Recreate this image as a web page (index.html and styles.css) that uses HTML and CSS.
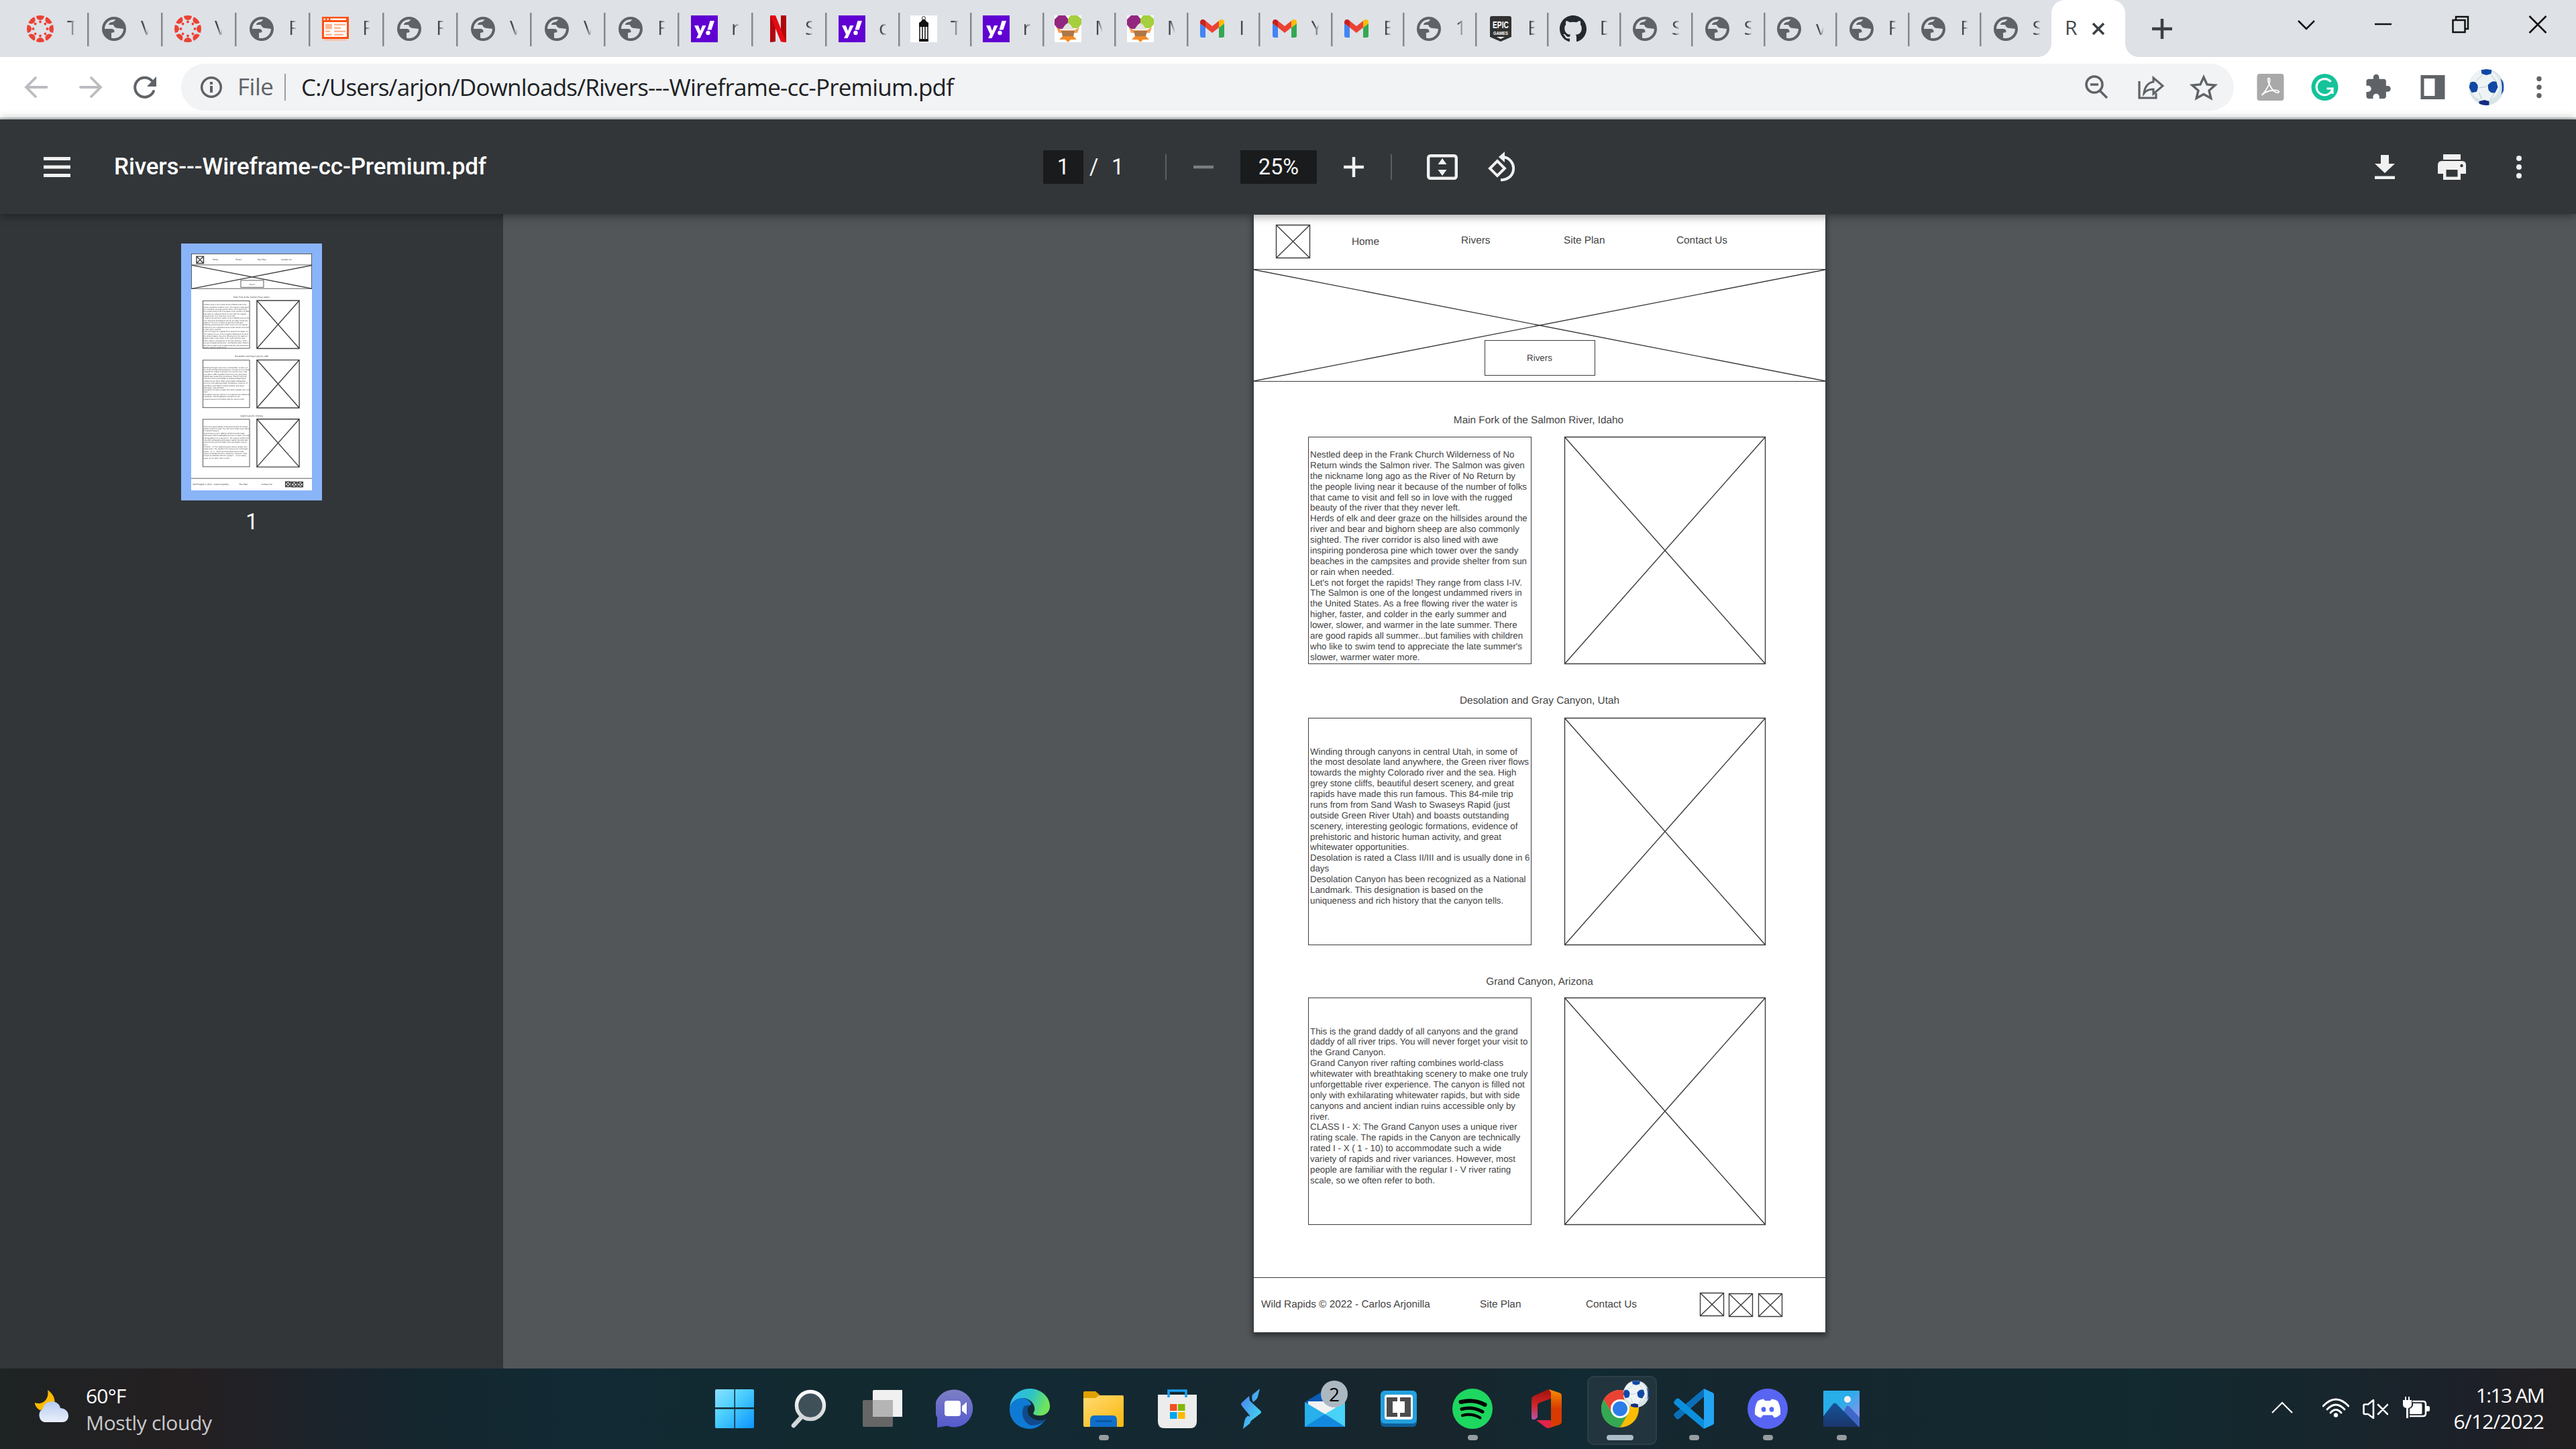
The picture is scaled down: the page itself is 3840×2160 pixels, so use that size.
FILE: index.html
```html
<!DOCTYPE html>
<html lang="en">
<head>
<meta charset="utf-8">
<title>Rivers---Wireframe-cc-Premium.pdf</title>
<link rel="stylesheet" href="styles.css">
</head>
<body>
<svg class="defs" width="0" height="0">
  <defs>
    <linearGradient id="gWin" x1="0" y1="0" x2="1" y2="1"><stop offset="0" stop-color="#8be0ff"/><stop offset=".4" stop-color="#4fd0ff"/><stop offset="1" stop-color="#0a95ff"/></linearGradient>
    <linearGradient id="gGlass" x1="0" y1="0" x2="0" y2="1"><stop offset="0" stop-color="#fff"/><stop offset="1" stop-color="#d0d4d6"/></linearGradient>
    <linearGradient id="gChat" x1="0" y1="0" x2="0" y2="1"><stop offset="0" stop-color="#7d7fc4"/><stop offset="1" stop-color="#5459cf"/></linearGradient>
    <linearGradient id="gEdge" x1="0" y1="0" x2="1" y2=".3"><stop offset="0" stop-color="#35b6f4"/><stop offset=".55" stop-color="#2cc3c8"/><stop offset="1" stop-color="#6fe45c"/></linearGradient>
    <linearGradient id="gFold" x1="0" y1="0" x2="1" y2="1"><stop offset="0" stop-color="#ffdb74"/><stop offset="1" stop-color="#fbb70c"/></linearGradient>
    <linearGradient id="gS" x1="0" y1="0" x2="1" y2="1"><stop offset="0" stop-color="#4a7bf0"/><stop offset="1" stop-color="#41e3ee"/></linearGradient>
    <linearGradient id="gOff" x1="0" y1="0" x2="0" y2="1"><stop offset="0" stop-color="#a01010"/><stop offset=".5" stop-color="#d02424"/><stop offset="1" stop-color="#b754a8"/></linearGradient>
    <linearGradient id="gOff2" x1="0" y1="0" x2="0" y2="1"><stop offset="0" stop-color="#f58f00"/><stop offset=".5" stop-color="#d83b01"/></linearGradient>
    <linearGradient id="gPh" x1="0" y1="0" x2="1" y2="1"><stop offset=".4" stop-color="#28aee9"/><stop offset="1" stop-color="#a98bf0"/></linearGradient>
    <linearGradient id="gMt" x1="0" y1="0" x2="0" y2="1"><stop offset="0" stop-color="#15559a"/><stop offset="1" stop-color="#1a356c"/></linearGradient>
    <linearGradient id="gCl" x1="0" y1="0" x2="0" y2="1"><stop offset="0" stop-color="#b6cbf2"/><stop offset="1" stop-color="#eaf0fa"/></linearGradient>
  </defs>
  <symbol id="canvas" viewBox="0 0 40 40">
    <g fill="#ec4133">
      <g id="lobes"><path d="M14 1a20 20 0 0 1 12 0a6 6 0 0 1-12 0z"/><circle cx="20" cy="9.5" r="1.9"/></g>
      <use href="#lobes" transform="rotate(45 20 20)"/><use href="#lobes" transform="rotate(90 20 20)"/><use href="#lobes" transform="rotate(135 20 20)"/><use href="#lobes" transform="rotate(180 20 20)"/><use href="#lobes" transform="rotate(225 20 20)"/><use href="#lobes" transform="rotate(270 20 20)"/><use href="#lobes" transform="rotate(315 20 20)"/>
    </g>
  </symbol>
  <symbol id="globe" viewBox="0 0 40 40"><circle cx="20" cy="20" r="18" fill="#5f6368"/><path fill="#dee1e6" d="M6 20A14 14 0 0 1 22.500 6.200L19 9.500Q12 10 12 14L19 14Q20.500 19 26 19L34 20A14 14 0 0 1 16 33.400L16 26L20.500 25Q21 20 16 20Z"/></symbol>
  <symbol id="doc" viewBox="0 0 40 40"><path fill="#f4c7b6" d="M3 34h34v4H3z"/><path fill="#ff4f12" d="M0 2h40v33H0z"/><path fill="#fff" d="M3 10h34v22H3zM2.500 4.500h2.500v2.500H2.500zM7.500 4.500h2.500v2.500H7.500zM12.500 4.500H36v2.500H12.500z"/><path fill="#ffb592" d="M5 12.500h10v8H5zM18 12.500h17v2.500H18zM18 17.500h10v2.500H18zM5 22.500h7v2.500H5zM18 22.500h17v2.500H18zM5 27.500h10v2.500H5zM18 27.500h14v2.500H18z"/></symbol>
  <symbol id="yahoo" viewBox="0 0 40 40"><path fill="#6001d2" d="M0 0h40v40H0z"/><path fill="#fff" d="M5 15h6l3 8 3-8h5.500L13.500 34H8l3-6zM28.500 8H35l-4.500 13.500H24.500z"/><circle cx="25.500" cy="26" r="3.200" fill="#fff"/></symbol>
  <symbol id="netflix" viewBox="0 0 40 40"><path fill="#b1060f" d="M8 0h8v39l-8 1zM24 0h8v40l-8-1z"/><path fill="#e50914" d="M8 0h8l16 40-8-1z"/></symbol>
  <symbol id="lantern" viewBox="0 0 40 40"><path fill="#fff" d="M0 0h40v40H0z"/><circle cx="20" cy="4" r="2.500" fill="none" stroke="#333"/><path fill="#111" d="M18 6h4l2 3 3 2v2H13v-2l3-2zM13 13h14v4H13zM13 35h14v4H13z"/><path stroke="#222" stroke-width="1.600" d="M14 17v19M18 17v19M22 17v19M26 17v19" fill="none"/></symbol>
  <symbol id="plants" viewBox="0 0 40 40"><path fill="#fff" d="M0 0h40v40H0z"/><path fill="#92267f" d="M6 0h10l4 5v10l-6 5H5l-5-6V6z"/><path fill="#a5cf3d" d="M24 0h10l6 5v8l-5 6h-9l-6-5V5z"/><path fill="#e3e3df" d="M16 14l4-3 4 3 5 7H11z"/><path fill="#f3a05d" d="M3 18l8 4h18l8-4-3 8H6z"/><path fill="#ad7747" d="M10 23h20l-2 8H12z"/><path fill="#f58a25" d="M12 31h16l5 5H24l-4 4-4-4H7z"/></symbol>
  <symbol id="gmail" viewBox="0 0 40 40"><path fill="#4285f4" d="M2 12l8 6v15H4.500Q2 33 2 30z"/><path fill="#34a853" d="M38 12l-8 6v15h5.500Q38 33 38 30z"/><path fill="#c5221f" d="M2 12V10c0-4 4-5 7-3l1 1v10z"/><path fill="#fbbc04" d="M38 12V10c0-4-4-5-7-3l-1 1v10z"/><path fill="#ea4335" d="M10 8l10 8 10-8v10l-10 8-10-8z"/></symbol>
  <symbol id="epic" viewBox="0 0 40 40"><path fill="#313131" d="M7 1h26q3 0 3 3v28L20 39 4 32V4q0-3 3-3z"/><text x="20" y="19" text-anchor="middle" class="epic-lg" textLength="24" lengthAdjust="spacingAndGlyphs">EPIC</text><text x="20" y="28.500" text-anchor="middle" class="epic-sm" textLength="22" lengthAdjust="spacingAndGlyphs">GAMES</text><path fill="#fff" d="M14 32h12l-6 3z"/></symbol>
  <symbol id="github" viewBox="0 0 16 16"><path fill="#24292f" d="M8 0C3.580 0 0 3.580 0 8c0 3.540 2.290 6.530 5.470 7.590.4.070.55-.17.55-.38 0-.19-.01-.82-.01-1.490-2.010.37-2.530-.49-2.690-.94-.09-.23-.48-.94-.82-1.130-.28-.15-.68-.52-.01-.53.63-.01 1.080.58 1.230.82.72 1.210 1.870.87 2.330.66.070-.52.28-.87.51-1.070-1.780-.2-3.640-.89-3.640-3.950 0-.87.31-1.590.82-2.150-.08-.2-.36-1.020.08-2.120 0 0 .67-.21 2.200.82.64-.18 1.320-.27 2-.27s1.360.09 2 .27c1.530-1.040 2.200-.82 2.200-.82.44 1.100.16 1.920.08 2.120.51.56.82 1.270.82 2.150 0 3.070-1.870 3.750-3.650 3.950.29.25.54.73.54 1.480 0 1.070-.01 1.930-.01 2.200 0 .21.15.46.55.38A8.010 8.010 0 0 0 16 8c0-4.420-3.580-8-8-8z"/></symbol>
  <symbol id="ball" viewBox="0 0 52 54"><clipPath id="ballClip"><ellipse cx="26" cy="27" rx="26" ry="27"/></clipPath><g clip-path="url(#ballClip)"><path fill="#d9e4e8" d="M0 0h52v54H0z"/><ellipse cx="24" cy="24" rx="22" ry="23" fill="#eef4f5"/><path fill="none" stroke="#b8c4cc" stroke-width="1" d="M20 9l-10 9M33 9l8 10M15 28l11-2M15 35l4 10M38 36l-6 9"/><path fill="#1148a5" d="M18 1l8-1 8 1-1 6-7 2-7-2zM2 20q7-4 11 4 1 5-2 10l-7 1-4-8zM28 24q6-8 13-5l2 8-4 8q-6 2-10-4zM47 14l5 6v12l-4 6q3-12-1-24z"/><path fill="#152c80" d="M15 48l8-2 7 2v6H15z"/></g></symbol>
</svg>

<div class="screen">
  <header class="tabstrip">
    <div class="tab wide"><svg class="fav"><use href="#canvas"/></svg><span>T</span></div>
    <div class="tab wide"><svg class="fav"><use href="#globe"/></svg><span>V</span></div>
    <div class="tab wide"><svg class="fav"><use href="#canvas"/></svg><span>V</span></div>
    <div class="tab wide"><svg class="fav"><use href="#globe"/></svg><span>R</span></div>
    <div class="tab wide"><svg class="fav"><use href="#doc"/></svg><span>R</span></div>
    <div class="tab wide"><svg class="fav"><use href="#globe"/></svg><span>R</span></div>
    <div class="tab wide"><svg class="fav"><use href="#globe"/></svg><span>V</span></div>
    <div class="tab wide"><svg class="fav"><use href="#globe"/></svg><span>V</span></div>
    <div class="tab wide"><svg class="fav"><use href="#globe"/></svg><span>F</span></div>
    <div class="tab wide"><svg class="fav"><use href="#yahoo"/></svg><span>r</span></div>
    <div class="tab wide"><svg class="fav"><use href="#netflix"/></svg><span>S</span></div>
    <div class="tab wide last"><svg class="fav"><use href="#yahoo"/></svg><span>c</span></div>
    <div class="tab"><svg class="fav"><use href="#lantern"/></svg><span>T</span></div>
    <div class="tab"><svg class="fav"><use href="#yahoo"/></svg><span>r</span></div>
    <div class="tab"><svg class="fav"><use href="#plants"/></svg><span>M</span></div>
    <div class="tab"><svg class="fav"><use href="#plants"/></svg><span>M</span></div>
    <div class="tab"><svg class="fav"><use href="#gmail"/></svg><span>I</span></div>
    <div class="tab"><svg class="fav"><use href="#gmail"/></svg><span>Y</span></div>
    <div class="tab"><svg class="fav"><use href="#gmail"/></svg><span>E</span></div>
    <div class="tab"><svg class="fav"><use href="#globe"/></svg><span>1</span></div>
    <div class="tab"><svg class="fav"><use href="#epic"/></svg><span>E</span></div>
    <div class="tab"><svg class="fav"><use href="#github"/></svg><span>D</span></div>
    <div class="tab"><svg class="fav"><use href="#globe"/></svg><span>S</span></div>
    <div class="tab"><svg class="fav"><use href="#globe"/></svg><span>S</span></div>
    <div class="tab"><svg class="fav"><use href="#globe"/></svg><span>v</span></div>
    <div class="tab"><svg class="fav"><use href="#globe"/></svg><span>F</span></div>
    <div class="tab"><svg class="fav"><use href="#globe"/></svg><span>F</span></div>
    <div class="tab"><svg class="fav"><use href="#globe"/></svg><span>S</span></div>
    <div class="tab active"><span>R</span><svg class="close" viewBox="0 0 20 20"><path d="M2 2l16 16M18 2L2 18" stroke="#3c4043" stroke-width="3.600"/></svg></div>
    <svg class="plus" viewBox="0 0 30 30"><path d="M15 0v30M0 15h30" stroke="#3c4043" stroke-width="4.500"/></svg>
    <div class="winctl">
      <svg viewBox="0 0 115 72"><path d="M46 31l12 12 12-12" fill="none" stroke="#111" stroke-width="2.500"/></svg>
      <svg viewBox="0 0 115 72"><path d="M45 36h25" stroke="#111" stroke-width="2.500"/></svg>
      <svg viewBox="0 0 115 72"><path d="M46.500 30h18v18h-18zM51 29v-4h18v18h-4" fill="none" stroke="#111" stroke-width="2.500"/></svg>
      <svg viewBox="0 0 115 72"><path d="M45.500 24l25 25M70.500 24l-25 25" stroke="#111" stroke-width="2.500"/></svg>
    </div>
  </header>

  <nav class="toolbar">
    <svg class="navbtn" viewBox="0 0 80 90"><path d="M50.500 45H21M34 31L20 45l14 14" fill="none" stroke="#babcc0" stroke-width="3.800" stroke-linecap="round"/></svg>
    <svg class="navbtn" viewBox="0 0 80 90"><path d="M21 45h30M37 31l14 14-14 14" fill="none" stroke="#babcc0" stroke-width="3.800" stroke-linecap="round"/></svg>
    <svg class="navbtn" viewBox="0 0 80 90"><path d="M51 51A14.500 14.500 0 1 1 48 35" transform="translate(-1 0)" fill="none" stroke="#5f6368" stroke-width="4" stroke-linecap="round"/><path d="M54 29v15H40z" fill="#5f6368"/></svg>
    <div class="omnibox">
      <svg class="info" viewBox="0 0 34 34"><circle cx="17" cy="17" r="14.300" fill="none" stroke="#5f6368" stroke-width="3.500"/><path d="M15 9h4v4h-4zM15 15h4v10h-4z" fill="#5f6368"/></svg>
      <span class="scheme">File</span>
      <span class="url">C:/Users/arjon/Downloads/Rivers---Wireframe-cc-Premium.pdf</span>
      <svg class="obtn" viewBox="0 0 80 70"><circle cx="37" cy="31" r="12" fill="none" stroke="#5f6368" stroke-width="3.500"/><path d="M31 31h12M45 40l11 11" stroke="#5f6368" stroke-width="3.500"/></svg>
      <svg class="obtn" viewBox="0 0 80 70"><path d="M24 26v25h25v-7" fill="none" stroke="#5f6368" stroke-width="3.200"/><path d="M45 21l14 12-14 12v-7c-7 0-11 2-14 6 1-9 6-16 14-17z" fill="none" stroke="#5f6368" stroke-width="3"/></svg>
      <svg class="obtn" viewBox="0 0 80 70"><path d="M40 20l5 11 12 1-9 8 2.800 11.500L40 45.500l-10.800 6L32 40l-9-8 12-1z" fill="none" stroke="#5f6368" stroke-width="3.400"/></svg>
    </div>
    <svg class="ext" viewBox="0 0 80 90"><rect x="20" y="25" width="40" height="40" rx="4" fill="#a9a9a9"/><path d="M27 57c9-9 13-20 12-24-2-4-5 0 0 9 4 8 9 12 13 11 3-2-3-5-11-3-6 1-11 4-14 7z" fill="none" stroke="#fff" stroke-width="1.800"/></svg>
    <svg class="ext" viewBox="0 0 80 90"><circle cx="40" cy="45" r="20" fill="#15c39a"/><path d="M49 37a12 12 0 1 0 2.500 10H43M51.500 47v8" fill="none" stroke="#fff" stroke-width="3.200"/></svg>
    <svg class="ext" viewBox="0 0 80 90"><path transform="translate(17.500 24) scale(1.730)" fill="#5f6368" d="M20.500 11H19V7c0-1.100-.9-2-2-2h-4V3.500a2.500 2.500 0 0 0-5 0V5H4c-1.100 0-1.990.9-1.990 2v3.800H3.500c1.490 0 2.700 1.210 2.700 2.700s-1.210 2.700-2.700 2.700H2V20c0 1.100.9 2 2 2h3.800v-1.500c0-1.490 1.210-2.700 2.700-2.700s2.700 1.210 2.700 2.700V22H17c1.100 0 2-.9 2-2v-4h1.500a2.500 2.500 0 0 0 0-5z"/></svg>
    <svg class="ext" viewBox="0 0 80 90"><path fill-rule="evenodd" fill="#5f6368" d="M21 27h36v36H21zM26 32v26h16V32z"/></svg>
    <svg class="avatar"><use href="#ball"/></svg>
    <svg class="kebab" viewBox="0 0 80 90"><g fill="#5f6368"><circle cx="40" cy="32.500" r="3.700"/><circle cx="40" cy="45" r="3.700"/><circle cx="40" cy="57.500" r="3.700"/></g></svg>
  </nav>

  <section class="pdfbar">
    <div class="left">
      <svg class="burger" viewBox="0 0 40 30"><path fill="#f1f1f1" d="M0 0h40v5H0zM0 12.500h40v5H0zM0 25h40v5H0z"/></svg>
      <span class="doctitle">Rivers---Wireframe-cc-Premium.pdf</span>
    </div>
    <div class="center">
      <span class="pagebox">1</span><span class="slash">/</span><span class="total">1</span>
      <i class="vr"></i>
      <svg class="minus" viewBox="0 0 30 30"><path d="M0 15h30" stroke="#7b7d80" stroke-width="4.500"/></svg>
      <span class="zoombox">25%</span>
      <svg class="pplus" viewBox="0 0 30 30"><path d="M15 0v30M0 15h30" stroke="#f1f1f1" stroke-width="4.500"/></svg>
      <i class="vr"></i>
      <svg class="fit" viewBox="0 0 46 38"><rect x="2.200" y="2.200" width="41.600" height="33.600" rx="3" fill="none" stroke="#f1f1f1" stroke-width="4.400"/><path fill="#f1f1f1" d="M23 6l6.500 9h-13zM23 32l6.500-9h-13z"/></svg>
      <svg class="rot" viewBox="0 0 46 46"><path fill="none" stroke="#f1f1f1" stroke-width="4" d="M14 14L25 25 14 36 3 25zM23 8a17 17 0 1 1-4 34" transform="translate(1 0)"/><path fill="#f1f1f1" d="M26 0v16l-9-8z"/></svg>
    </div>
    <div class="right">
      <svg class="dl" viewBox="0 0 30 36"><path fill="#f1f1f1" d="M9 0h12v13h9L15 27 0 13h9zM0 31.500h30V36H0z"/></svg>
      <svg class="pr" viewBox="0 0 42 38"><path fill="#f1f1f1" d="M8 0h26v8H8zM6 10h30q6 0 6 6v13h-8v9H8v-9H0V16q0-6 6-6z"/><path fill="#323639" d="M12.500 23h17v10.500h-17z"/><circle cx="35.500" cy="17" r="2.200" fill="#323639"/></svg>
      <svg class="pk" viewBox="0 0 10 36"><g fill="#f1f1f1"><circle cx="5" cy="5" r="4"/><circle cx="5" cy="18" r="4"/><circle cx="5" cy="31" r="4"/></g></svg>
    </div>
  </section>

  <main class="viewer">
    <aside class="side">
      <div class="thumb"><div class="mini"></div></div>
      <span class="thumbno">1</span>
    </aside>
    <div class="stage">
      <article class="sheet">
        <div class="w-head">
          <svg class="ph logo" viewBox="0 0 51 50" preserveAspectRatio="none"><path d="M.5.5h50v49H.5zM.5.500l50 49M50.500.500l-50 49"/></svg>
          <div class="w-nav"><span class="home">Home</span><span>Rivers</span><span>Site Plan</span><span>Contact Us</span></div>
        </div>
        <div class="w-hero">
          <svg class="ph cross" viewBox="0 0 852 166"><path d="M0 0l852 166M852 0L0 166"/></svg>
          <span class="w-btn">Rivers</span>
        </div>
        <div class="w-sec one">
          <h2>Main Fork of the Salmon River, Idaho</h2>
          <div class="w-row">
            <p>Nestled deep in the Frank Church Wilderness of No<br>Return winds the Salmon river. The Salmon was given<br>the nickname long ago as the River of No Return by<br>the people living near it because of the number of folks<br>that came to visit and fell so in love with the rugged<br>beauty of the river that they never left.<br>Herds of elk and deer graze on the hillsides around the<br>river and bear and bighorn sheep are also commonly<br>sighted. The river corridor is also lined with awe<br>inspiring ponderosa pine which tower over the sandy<br>beaches in the campsites and provide shelter from sun<br>or rain when needed.<br>Let's not forget the rapids! They range from class I-IV.<br>The Salmon is one of the longest undammed rivers in<br>the United States. As a free flowing river the water is<br>higher, faster, and colder in the early summer and<br>lower, slower, and warmer in the late summer. There<br>are good rapids all summer...but families with children<br>who like to swim tend to appreciate the late summer's<br>slower, warmer water more.</p>
            <svg class="ph pic" viewBox="0 0 300 339"><path d="M.5.500h299v338H.5zM.5.500l299 338M299.500.500L.5 338.500"/></svg>
          </div>
        </div>
        <div class="w-sec two">
          <h2>Desolation and Gray Canyon, Utah</h2>
          <div class="w-row">
            <p>Winding through canyons in central Utah, in some of<br>the most desolate land anywhere, the Green river flows<br>towards the mighty Colorado river and the sea. High<br>grey stone cliffs, beautiful desert scenery, and great<br>rapids have made this run famous. This 84-mile trip<br>runs from from Sand Wash to Swaseys Rapid (just<br>outside Green River Utah) and boasts outstanding<br>scenery, interesting geologic formations, evidence of<br>prehistoric and historic human activity, and great<br>whitewater opportunities.<br>Desolation is rated a Class II/III and is usually done in 6<br>days<br>Desolation Canyon has been recognized as a National<br>Landmark. This designation is based on the<br>uniqueness and rich history that the canyon tells.</p>
            <svg class="ph pic" viewBox="0 0 300 339"><path d="M.5.500h299v338H.5zM.5.500l299 338M299.500.500L.5 338.500"/></svg>
          </div>
        </div>
        <div class="w-sec three">
          <h2>Grand Canyon, Arizona</h2>
          <div class="w-row">
            <p>This is the grand daddy of all canyons and the grand<br>daddy of all river trips. You will never forget your visit to<br>the Grand Canyon.<br>Grand Canyon river rafting combines world-class<br>whitewater with breathtaking scenery to make one truly<br>unforgettable river experience. The canyon is filled not<br>only with exhilarating whitewater rapids, but with side<br>canyons and ancient indian ruins accessible only by<br>river.<br>CLASS I - X: The Grand Canyon uses a unique river<br>rating scale. The rapids in the Canyon are technically<br>rated I - X ( 1 - 10) to accommodate such a wide<br>variety of rapids and river variances. However, most<br>people are familiar with the regular I - V river rating<br>scale, so we often refer to both.</p>
            <svg class="ph pic" viewBox="0 0 300 339"><path d="M.5.500h299v338H.5zM.5.500l299 338M299.500.500L.5 338.500"/></svg>
          </div>
        </div>
        <div class="w-foot">
          <span class="copy">Wild Rapids © 2022 - Carlos Arjonilla</span><span class="plan">Site Plan</span><span class="contact">Contact Us</span>
          <svg class="ph soc up" viewBox="0 0 36 35"><path d="M.5.500h35v34H.5zM.5.500l35 34M35.500.500l-35 34"/></svg>
          <svg class="ph soc" viewBox="0 0 36 35"><path d="M.5.500h35v34H.5zM.5.500l35 34M35.500.500l-35 34"/></svg>
          <svg class="ph soc" viewBox="0 0 36 35"><path d="M.5.500h35v34H.5zM.5.500l35 34M35.500.500l-35 34"/></svg>
        </div>
      </article>
    </div>
  </main>

  <footer class="taskbar">
    <div class="weather">
      <svg class="wicon" viewBox="0 0 54 50"><path fill="#fdb900" d="M20 1c10 7 14 17 7 28L8 31C3 27 1 24 1 20c10 4 22-4 19-19z"/><path fill="url(#gCl)" d="M15 49A11 11 0 0 1 13 29c1-14 24-14 26-1 16 1 15 21 3 21z"/></svg>
      <div class="wtext"><span>60°F</span><span class="dim">Mostly cloudy</span></div>
    </div>
    <div class="apps">
      <div class="app"><svg viewBox="0 0 60 60"><path fill="url(#gWin)" d="M3 1h26.500v27H1V3q0-2 2-2zM31 1h26q2 0 2 2v25H31zM1 30.500h28.500V59H3q-2 0-2-2zM31 30.500h28V57q0 2-2 2H31z"/></svg></div>
      <div class="app"><svg viewBox="0 0 60 60"><path d="M20 42L8 55" stroke="#d3d7d9" stroke-width="6.500" stroke-linecap="round"/><circle cx="33" cy="25" r="20.500" fill="#3f5058" stroke="url(#gGlass)" stroke-width="5.500"/></svg></div>
      <div class="app"><svg viewBox="0 0 60 60"><rect x="16" y="2" width="45" height="40" rx="2" fill="#f0f0f0"/><rect x="1" y="17" width="45" height="40" rx="2" fill="#666"/><path fill="#b5b5b5" d="M16 17h30v25H16z"/></svg></div>
      <div class="app"><svg viewBox="0 0 60 60"><path fill="url(#gChat)" d="M29 1.500a28 28 0 1 1-12 54L2 58V43A28 28 0 0 1 29 1.500z"/><rect x="13" y="18" width="24" height="23" rx="4" fill="#fff"/><path fill="#fff" d="M39 26l7-6v19l-7-6z"/></svg></div>
      <div class="app"><svg viewBox="0 0 60 60"><path fill="#0f7ad4" d="M0 29C2 17 12 12 20 14c8 2 12 6 12 10-9 3-8 19 5 23 8 3 14 1 17-2-6 10-15 15-24 15C12 60-1 46 0 29z"/><path fill="#114a8c" d="M22 26c-6 8-3 24 10 29 8 0 18-3 24-11-10 7-24 2-28-6-2-5-1-10 1-14z"/><path fill="url(#gEdge)" d="M0 29C1 12 14 0 30 0s31 12 30 28c-1 9-9 13-18 12-10-1-6-4-5-7 2-9-6-19-18-19C8 14 1 22 0 29z"/></svg></div>
      <div class="app"><svg viewBox="0 0 60 60"><path fill="#e0a000" d="M2 4h16l6 5v10H0V6q0-2 2-2z"/><path fill="url(#gFold)" d="M18 14l6-4h34q2 0 2 2v43q0 2-2 2H2q-2 0-2-2V14z"/><path fill="#0f6fca" d="M10 57V47q0-7 6-7h28q6 0 6 7v10z"/><path stroke="#0a4d94" stroke-width="2" d="M18 48.500h24"/></svg><i class="dot"></i></div>
      <div class="app"><svg viewBox="0 0 60 60"><path fill="#ececec" d="M1 9h58v40q0 10-10 10H11Q1 59 1 49z"/><path fill="none" stroke="#1ba0ee" stroke-width="3.500" d="M17 13V3h26v10"/><path fill="#f25022" d="M19 23h10.500v10H19z"/><path fill="#7fba00" d="M31 23h10.500v10H31z"/><path fill="#00a4ef" d="M19 35h10.500v10H19z"/><path fill="#ffb900" d="M31 35h10.500v10H31z"/></svg></div>
      <div class="app"><svg viewBox="0 0 60 60"><path fill="url(#gS)" d="M27 11L15 22q0 3 3 6l10 12-2 11 18-14q2-2 0-4L28 18zM43 0L32 9q-2 4 1 11 6-4 7-8zM18 60l10-8q4-5-2-12-5 3-6 9z"/></svg></div>
      <div class="app"><svg viewBox="0 0 60 60"><path fill="#0a5cb5" d="M0 20L30 2l30 18-30 22z"/><path fill="#f2f2f2" d="M5 19h50v8L30 42 5 27z"/><path fill="#27b0ea" d="M0 20l30 18L60 57H0z"/><path fill="#48d2f8" d="M60 20L30 38l30 19z"/><path fill="#1389dd" d="M0 57l30-19 30 19z"/></svg><span class="badge">2</span></div>
      <div class="app"><svg viewBox="0 0 60 60"><rect x="3" y="6" width="54" height="51" rx="6" fill="#105f99"/><rect x="3" y="3" width="54" height="49" rx="6" fill="#22a0de"/><rect x="9" y="9" width="42" height="37" rx="4" fill="#fff"/><path fill="#4c4c4c" d="M12 13h16v6h-7v17h7v6H12zM48 13H32v6h7v17h-7v6h16z"/></svg></div>
      <div class="app"><svg viewBox="0 0 60 60"><circle cx="30" cy="30" r="30" fill="#1ed760"/><path fill="none" stroke="#000" stroke-linecap="round" stroke-width="6" d="M12.500 20q19-5 36 4"/><path fill="none" stroke="#000" stroke-linecap="round" stroke-width="5" d="M14 30.500q16-4.500 31 4"/><path fill="none" stroke="#000" stroke-linecap="round" stroke-width="4.200" d="M15 40q14-4 26.500 3.500"/></svg><i class="dot"></i></div>
      <div class="app"><svg viewBox="0 0 60 60"><path fill="url(#gOff)" d="M33 1l6 3v10L20 21q-3 1-3 4v18l-4 3q-5 1-5-3V17q0-4 3-6z"/><path fill="#e3234a" d="M15 47h21l6 9-9 3q-3 0-5-2z"/><path fill="url(#gOff2)" d="M34 1l15 5q4 1 4 5v38q0 4-4 5l-16 5 4-5V6z"/></svg></div>
      <div class="app current"><svg class="chrome" viewBox="0 0 60 60"><circle cx="30" cy="30" r="28" fill="#fbbc04"/><path fill="#ea4335" d="M5.700 16A28 28 0 0 1 54.300 16L30 16 18 37z"/><path fill="#34a853" d="M5.700 16A28 28 0 0 0 30 58l12-21-24 0z"/><circle cx="30" cy="30" r="14" fill="#fff"/><circle cx="30" cy="30" r="11" fill="#2b7de9"/></svg><svg class="mini-ball"><use href="#ball"/></svg><i class="pill"></i></div>
      <div class="app"><svg viewBox="0 0 60 60"><path fill="#0a6fb8" d="M0 40l4 5q2 1 4 0L45 12V0L1 37z"/><path fill="#0b8fdc" d="M0 20l4-5q2-1 4 0l37 32v13L1 23z"/><path fill="#22a5f3" d="M45 0l13 6q2 1 2 3v42q0 2-2 3l-13 6z"/></svg><i class="dot"></i></div>
      <div class="app"><svg viewBox="0 0 60 60"><circle cx="30" cy="30" r="30" fill="#5865f2"/><path fill="#fff" d="M24 15.500l2 2.500h8l2-2.500q5 .5 9 3 5 9 4 20-4 4-9 5l-3-4h-14l-3 4q-5-1-9-5-1-11 4-20 4-2.500 9-3z"/><ellipse cx="24" cy="31" rx="3.400" ry="3.700" fill="#5865f2"/><ellipse cx="36" cy="31" rx="3.400" ry="3.700" fill="#5865f2"/></svg><i class="dot"></i></div>
      <div class="app"><svg viewBox="0 0 60 60"><rect x="3" y="3" width="54" height="54" rx="1" fill="url(#gPh)"/><path fill="#3f68c8" d="M26 50l11-23q2-3 5 0l15 16v14H30z"/><path fill="url(#gMt)" d="M3 41l15-19q2-1 4 0l34 35H3z"/><circle cx="39" cy="16" r="5" fill="#f2f2f2"/></svg><i class="dot"></i></div>
    </div>
    <div class="tray">
      <svg class="tchev" viewBox="0 0 32 18"><path d="M1 17L16 2l15 15" fill="none" stroke="#fff" stroke-width="2.200"/></svg>
      <svg class="wifi" viewBox="0 0 40 29"><path d="M1 12Q20-8 39 12M7 17q13-14 26 0M12 22q8-9 16 0" fill="none" stroke="#fff" stroke-width="2.800" stroke-linecap="round"/><circle cx="20" cy="25.500" r="3.200" fill="#fff"/></svg>
      <svg class="vol" viewBox="0 0 38 29"><path d="M1.500 9.500q0-2 2-2H8l8-6.500v27L8 22H3.500q-2 0-2-2zM23 8l14 14M37 8L23 22" fill="none" stroke="#fff" stroke-width="2.600" stroke-linejoin="round" stroke-linecap="round"/></svg>
      <svg class="bat" viewBox="0 0 40 32"><path d="M14 7h16q4 0 4 4v14q0 4-4 4H10" fill="none" stroke="#fff" stroke-width="2.600"/><path fill="#fff" d="M35 14h3q2 0 2 2v4q0 2-2 2h-3zM15 10h12q1.500 0 1.500 1.500v13q0 1.500-1.500 1.500H10v-8q5-2 5-6zM0 5h3V0h2v5h3V0h2v5h3v7q0 4-5 5v15H5V17q-5-1-5-5z"/></svg>
      <div class="clock"><span class="time">1:13 AM</span><span class="date">6/12/2022</span></div>
    </div>
  </footer>
</div>
<script src="thumbnail.js"></script>
</body>
</html>
```

FILE: thumbnail.js
```js
// The sidebar thumbnail is a scaled copy of the document page.
const page = document.querySelector('.sheet').cloneNode(true);
page.setAttribute('aria-hidden', 'true');
document.querySelector('.mini').appendChild(page);
```

FILE: styles.css
```css
* { box-sizing: border-box; }
body { margin: 0; background: #525659; font-family: "Open Sans", "Noto Sans", sans-serif; overflow: hidden; }
svg { display: block; flex: none; }
.defs { position: absolute; }
.screen { width: 3840px; height: 2160px; display: flex; flex-direction: column; }
.epic-lg { font: bold 15px "Liberation Sans", sans-serif; fill: #fff; }
.epic-sm { font: bold 8px "Liberation Sans", sans-serif; fill: #fff; }

/* tab strip */
.tabstrip { height: 85px; background: #dee1e6; display: flex; padding-left: 20px; flex: none; }
.tab { width: 107.5px; height: 85px; padding-left: 18.500px; display: flex; align-items: center; flex: none; font-size: 30px; line-height: 40px; color: #45494d;
  background: linear-gradient(#85888d, #85888d) no-repeat 0 19px / 2.500px 50px; }
.tab.wide { width: 110px; padding-left: 20px; }
.tab.last { width: 108.500px; }
.tab:first-child { background: none; }
.fav { width: 40px; height: 40px; }
.tab span { width: 11px; margin: -4px 0 0 20px; overflow: hidden; white-space: nowrap; -webkit-mask-image: linear-gradient(90deg, #000 40%, transparent 110%); mask-image: linear-gradient(90deg, #000 40%, transparent 110%); }
.tab.active { position: relative; width: 110px; margin-left: -.5px; padding-left: 20px; background: #fff; border-radius: 20px 20px 0 0; }
.tab.active::before, .tab.active::after { content: ""; position: absolute; bottom: 0; width: 20px; height: 20px; }
.tab.active::before { left: -20px; background: radial-gradient(circle at 0 0, transparent 19.500px, #fff 20px); }
.tab.active::after { right: -20px; background: radial-gradient(circle at 100% 0, transparent 19.500px, #fff 20px); }
.tab.active span { margin-left: 0; width: 20px; -webkit-mask-image: none; mask-image: none; }
.close { width: 20px; height: 20px; margin-left: 20px; }
.plus { width: 30px; height: 30px; margin: 28px 0 0 40px; }
.winctl { display: flex; margin-left: auto; }
.winctl svg { width: 115px; height: 72px; }

/* address bar */
.toolbar { height: 93px; background: #fff; border-bottom: 3px solid #d8dadc; display: flex; align-items: center; padding-left: 19px; flex: none; }
.navbtn { width: 80px; height: 90px; }
.omnibox { width: 3060px; height: 70px; margin-left: 11px; border-radius: 35px; background: #f1f3f4; display: flex; align-items: center; padding-left: 28px; font-size: 35px; line-height: 50px; white-space: nowrap; }
.info { width: 34px; height: 34px; }
.scheme { width: 72px; height: 40px; line-height: 38px; margin-left: 22px; border-right: 2.500px solid #9a9da1; color: #5f6368; letter-spacing: -.5px; }
.url { margin: 0 auto 0 23px; color: #202124; letter-spacing: -.790px; }
.obtn { width: 80px; height: 70px; }
.obtn:last-child { margin-right: 5px; }
.ext { width: 81px; height: 90px; }
.toolbar .omnibox + .ext { margin-left: 14px; }
.avatar { width: 53px; height: 54px; margin-left: 12px; }
.kebab { width: 80px; height: 90px; margin-left: 12px; }

/* PDF toolbar */
.pdfbar { position: relative; z-index: 2; height: 141px; background: #323639; box-shadow: 0 2px 14px rgba(0,0,0,.45); display: flex; align-items: center; flex: none; font-family: Roboto, sans-serif; font-size: 32.500px; color: #f8f8f8; }
.left { width: 1555px; display: flex; align-items: center; padding-left: 65px; }
.burger { width: 40px; height: 30px; }
.doctitle { margin-left: 65px; font-size: 35px; font-weight: 500; letter-spacing: -.150px; color: #fff; white-space: nowrap; }
.center { display: flex; align-items: center; }
.pagebox { width: 60px; height: 50px; line-height: 50px; background: #191b1c; text-align: center; }
.slash { width: 32px; padding-left: 9px; }
.total { width: 90px; padding-left: 10px; }
.vr { width: 2px; height: 38px; background: #5d6063; flex: none; }
.minus { width: 30px; height: 30px; margin-left: 40px; }
.zoombox { width: 114px; height: 50px; line-height: 50px; margin-left: 40px; background: #191b1c; text-align: center; }
.pplus { width: 30px; height: 30px; margin: 0 40px; }
.fit { width: 46px; height: 38px; margin-left: 52px; }
.rot { width: 46px; height: 46px; margin-left: 44px; }
.right { display: flex; align-items: center; margin-left: auto; padding-right: 80px; }
.dl { width: 30px; height: 36px; }
.pr { width: 42px; height: 38px; margin-left: 64px; }
.pk { width: 10px; height: 36px; margin-left: 74px; }

/* viewer */
.viewer { flex: 1; display: flex; min-height: 0; }
.side { width: 750px; background: #323639; display: flex; flex-direction: column; align-items: center; padding-top: 44px; }
.thumb { width: 210px; height: 383px; padding: 15px; background: #8ab4f8; }
.mini { width: 180px; height: 353px; overflow: hidden; background: #fff; }
.thumbno { margin: 12px 0 0 1px; font-family: Roboto, sans-serif; font-size: 32.500px; line-height: 40px; color: #fff; }
.stage { flex: 1; padding: 1px 0 0 1119px; }

.sheet { --ink: #3c3c3c; --line: 1px; width: 852px; height: 1666px; background: #fff; color: #444; box-shadow: 0 3px 8px 2px rgba(0,0,0,.45); font: 15.350px/18px "Liberation Sans", Arial, sans-serif; text-rendering: geometricPrecision; white-space: nowrap; display: flex; flex-direction: column; }
.mini .sheet { --ink: #404040; --line: 4.700px; transform: scale(.2113); transform-origin: 0 0; box-shadow: none; }
.ph { fill: none; stroke: var(--ink); stroke-width: calc(var(--line) * 1.400); overflow: visible; }
.w-head { height: 82px; border-bottom: var(--line) solid var(--ink); display: flex; flex: none; }
.logo { width: 51px; height: 50px; margin: 15px 0 0 33px; }
.w-nav { display: grid; grid-template-columns: 163px 153px 168px auto; margin: 30px 0 0 62px; align-items: start; }
.home { margin-top: 2px; }
.w-hero { height: 167px; border-bottom: var(--line) solid var(--ink); display: grid; justify-items: center; align-items: start; flex: none; }
.cross { grid-area: 1 / 1; width: 852px; height: 166px; }
.w-btn { grid-area: 1 / 1; z-index: 1; width: 165px; height: 53px; margin-top: 105px; border: var(--line) solid var(--ink); background: #fff; text-align: center; font-size: 13.330px; line-height: 52px; }
.mini .w-head, .mini .w-hero { border-left: var(--line) solid var(--ink); border-right: var(--line) solid var(--ink); }
.mini .w-head { border-top: var(--line) solid var(--ink); }
.w-sec h2 { margin: 0; font-size: 15.350px; line-height: 18px; font-weight: 400; text-align: center; }
.w-row { display: flex; gap: 49px; margin-top: 16px; padding-left: 81px; }
.w-row p { width: 333px; height: 339px; margin: 0; border: var(--line) solid var(--ink); padding-left: 2px; font-size: 13.330px; line-height: 15.870px; }
.pic { width: 300px; height: 339px; }
.one { padding-top: 49px; }
.one h2 { padding-right: 3px; }
.one .w-row { margin-top: 15px; }
.one p { padding-top: 18px; }
.two { padding-top: 46px; }
.two p { padding-top: 41.500px; }
.three { padding-top: 46px; }
.three .w-row { margin-top: 14px; }
.three p { padding-top: 41.500px; }
.w-foot { flex: 1; margin-top: 78px; border-top: var(--line) solid var(--ink); display: flex; align-items: flex-start; padding: 31px 0 0 11px; }
.copy { width: 326px; }
.plan { width: 158px; }
.contact { width: 169.500px; }
.soc { width: 36px; height: 35px; margin: -8px 7.700px 0 0; }
.soc.up { margin-top: -9px; }

/* taskbar */
.taskbar { height: 120px; flex: none; display: flex; position: relative; z-index: 3; color: #fff; font-size: 30px;
  background: linear-gradient(90deg, #1e2324 0, #241f21 280px, #1c232b 480px, #14262e 620px, #122a34 850px, #12292f 1300px, #122a34 1500px, #18252c 2150px, #122a33 2350px, #16262e 2600px, #122a30 3200px, #18252c 3500px, #1d2028 3690px, #231f20 3840px); }
.weather { width: 1040px; display: flex; padding: 21px 0 0 51px; }
.wicon { width: 54px; height: 50px; margin-top: 10px; }
.wtext { display: flex; flex-direction: column; line-height: 40px; margin-left: 23px; letter-spacing: -.800px; }
.dim { color: #c8c9ca; letter-spacing: -.350px; }
.apps { display: flex; }
.app { position: relative; width: 110px; height: 120px; display: flex; flex-direction: column; align-items: center; padding-top: 30px; }
.app > svg { width: 60px; height: 60px; }
.dot { width: 15px; height: 8px; margin-top: 9px; border-radius: 4px; background: #969da0; }
.pill { width: 40px; height: 8px; margin-top: 9px; border-radius: 4px; background: #adbdc8; }
.badge { position: absolute; left: 49px; top: 18px; width: 40px; height: 40px; border-radius: 50%; background: #abb8c1; color: #000; text-align: center; font-size: 28px; line-height: 40px; }
.current::before { content: ""; position: absolute; left: 6px; top: 11px; width: 100px; height: 99px; border-radius: 10px; background: #22353e; border: 2px solid #2c3f47; }
.current > * { position: relative; }
.app > .mini-ball { position: absolute; left: 59px; top: 18px; width: 40px; height: 40px; }
.tray { display: flex; margin-left: auto; padding-right: 48px; align-items: flex-start; }
.tchev { width: 32px; height: 18px; margin-top: 49px; }
.wifi { width: 40px; height: 29px; margin: 44px 0 0 44px; }
.vol { width: 38px; height: 29px; margin: 46px 0 0 20px; }
.bat { width: 40px; height: 32px; margin: 42px 0 0 22px; }
.clock { width: 170px; display: flex; flex-direction: column; text-align: right; line-height: 39px; padding-top: 20px; }
.time { letter-spacing: -1.700px; }
.date { letter-spacing: -.850px; }
```
